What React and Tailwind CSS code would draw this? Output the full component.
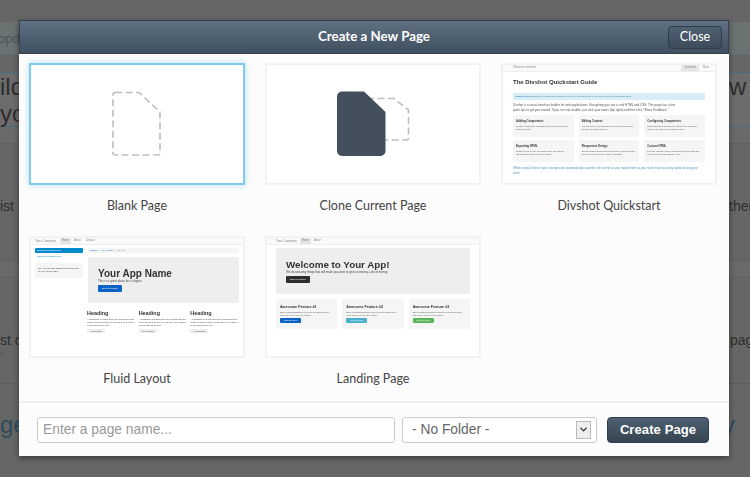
import { ChevronDown } from 'lucide-react';

const thumbNav = 'flex items-center h-[7px] bg-[#fafafa] border-b border-[#eee] text-[#888] text-[2.6px]';

const wells = [
  ['Adding Components', 'To add a component, just drag it from the list on the right onto the canvas.'],
  ['Editing Content', 'You can edit the text sections of a component by double-clicking. Try editing this text!'],
  ['Configuring Components', 'Each component has different options. The "Inspector" panel on the right lets you change them.'],
  ['Exporting HTML', 'Divshot is built to give you usable code, just click the "Export Code" button in the top toolbar.'],
  ['Responsive Design', 'Divshot designs look great on any device. Click the laptop icon to preview for phone, tablet, or desktop.'],
  ['Custom HTML', 'Drop the "Custom HTML" component onto the page and double-click it to add arbitrary HTML.'],
];

const features = [
  ['Awesome Feature #1', 'bg-[#0a62c4]'],
  ['Awesome Feature #2', 'bg-[#49afcd]'],
  ['Awesome Feature #3', 'bg-[#5bb75b]'],
];

function BlankIcon() {
  return (
    <svg width="50" height="66" viewBox="0 0 50 66" fill="none">
      <path
        d="M3 1.5H27L48 21V62a2 2 0 0 1-2 2H3a2 2 0 0 1-2-2V3.5a2 2 0 0 1 2-2Z"
        stroke="#bcbec1"
        strokeWidth="1.6"
        strokeDasharray="7 3.5"
      />
    </svg>
  );
}

function CloneIcon() {
  return (
    <svg width="74" height="66" viewBox="0 0 74 66" fill="none">
      <path
        d="M30 7.5H57L71.5 19V47a2 2 0 0 1-2 2H40"
        stroke="#bcbec1"
        strokeWidth="1.6"
        strokeDasharray="7 3.5"
      />
      <path
        d="M5 0.5H27L48.5 21V60a5 5 0 0 1-5 5H5a5 5 0 0 1-5-5V5.5a5 5 0 0 1 5-5Z"
        fill="#444f5e"
      />
    </svg>
  );
}

function QuickstartThumb() {
  return (
    <div className="h-full flex flex-col blur-[0.3px]">
      <div className={thumbNav}>
        <span className="ml-[10px] flex-1">Welcome to Divshot</span>
        <span className="bg-[#e5e5e5] h-full px-[3px] flex items-center">Quickstart</span>
        <span className="px-[4px] mr-[2px]">More</span>
      </div>
      <div className="px-[10px]">
        <div className="mt-[6px] text-[6px] leading-[8px] font-bold text-[#333]">The Divshot Quickstart Guide</div>
        <div className="mt-[7px] h-[7px] bg-[#d9edf7] text-[#3a87ad] text-[2.3px] leading-[7px] px-[2px] whitespace-nowrap overflow-hidden">
          <b>Ready to dive in?</b> Click the page name dropdown in the top left and create a new page using the embedded form.
        </div>
        <p className="mt-[3px] text-[3.05px] leading-[4.6px] text-[#555] whitespace-nowrap">
          Divshot is a visual interface builder for web applications. Everything you see is real HTML and CSS. This page has a few<br />
          quick tips to get you started. If you run into trouble, just click your name (top right) and then click "Share Feedback."
        </p>
        <div className="mt-[3px] grid grid-cols-3 gap-x-[5px] gap-y-[3px]">
          {wells.map(([title, text]) => (
            <div key={title} className="h-[22px] bg-[#f5f5f5] rounded-[1px] px-[3px] pt-[5px] text-[2.1px] leading-[3px] text-[#555]">
              <div className="text-[2.8px] leading-[3.5px] font-bold text-[#333]">{title}</div>
              <div className="mt-[1px]">{text}</div>
            </div>
          ))}
        </div>
        <p className="mt-[4px] text-[3.05px] leading-[5px] text-[#4d93b8]">
          While using Divshot, your changes are automatically saved to the server as you make them so you never have to worry about losing your work.
        </p>
      </div>
    </div>
  );
}

function FluidThumb() {
  return (
    <div className="h-full flex flex-col blur-[0.3px]">
      <div className={thumbNav}>
        <span className="ml-[4px] mr-[4px] text-[3.2px]">Your Company</span>
        <span className="bg-[#e5e5e5] h-full px-[2px] flex items-center">Home</span>
        <span className="px-[3px]">About</span>
        <span className="px-[2px]">Contact</span>
      </div>
      <div className="flex gap-[5px] pl-[4px] pr-[4px] pt-[3px]">
        <div className="w-[48px] text-[2.3px]">
          <div className="h-[5px] leading-[5px] px-[2px] bg-[#0088cc] text-white rounded-[1px]">Sidebar Navigation One</div>
          <div className="h-[5px] leading-[5px] mt-[1px] px-[2px] text-[#0088cc]">Sidebar Navigation Two</div>
          <div className="mt-[4px] h-[15px] bg-[#f5f5f5] rounded-[1px] px-[3px] py-[4px] leading-[3px] text-[#444]">
            Tip: You can add additional components to your layout easily
          </div>
        </div>
        <div className="flex-1">
          <div className="h-[5px] leading-[5px] px-[2px] bg-[#f5f5f5] text-[2.3px] text-[#0088cc]">
            Original <span className="ml-[2px]">Add Another</span> <span className="ml-[2px] text-[#999]">Last One</span>
          </div>
          <div className="mt-[4px] h-[46px] bg-[#eeeeee] pl-[10px] pt-[12px]">
            <div className="text-[10px] leading-[10px] font-bold text-[#333]">Your App Name</div>
            <div className="mt-[1px] text-[3px] leading-[3px] text-[#444]">This is a great place for a slogan.</div>
            <div className="mt-[2px] w-[24px] h-[7px] rounded-[1px] bg-[#0a62c4] text-white text-[2.4px] leading-[7px] text-center">Sign Up Today!</div>
          </div>
          <div className="mt-[7px] grid grid-cols-3 gap-x-[3px] -ml-[1px]">
            {[0, 1, 2].map((i) => (
              <div key={i} className="text-[2.2px] leading-[3px] text-[#444]">
                <div className="text-[5.4px] leading-[7px] font-bold text-[#333]">Heading</div>
                <div className="mt-[1px]">A paragraph of details about the heading and the related content so that you can have an example of how this should look.</div>
                <div className="mt-[2px] w-[18px] h-[4px] bg-[#eee] leading-[4px] text-center text-[#555]">View Details</div>
              </div>
            ))}
          </div>
        </div>
      </div>
    </div>
  );
}

function LandingThumb() {
  return (
    <div className="h-full flex flex-col blur-[0.3px]">
      <div className={thumbNav}>
        <span className="ml-[9px] mr-[3px] text-[3.2px]">Your Company</span>
        <span className="bg-[#e5e5e5] h-full px-[2px] flex items-center">Home</span>
        <span className="px-[3px]">About</span>
      </div>
      <div className="px-[9px]">
        <div className="mt-[3px] h-[46px] bg-[#eeeeee] rounded-[1px] pl-[10px] pt-[12px]">
          <div className="text-[9.8px] leading-[10px] font-bold text-[#333]">Welcome to Your App!</div>
          <div className="mt-[1px] text-[2.9px] leading-[3px] text-[#444]">We do amazing things that will make you want to give us money. Lots of money.</div>
          <div className="mt-[2px] w-[24px] h-[7px] rounded-[1px] bg-[#2d2d2d] text-white text-[2.4px] leading-[7px] text-center">Sign Up Today!</div>
        </div>
        <div className="mt-[5px] grid grid-cols-3 gap-x-[5px]">
          {features.map(([title, color]) => (
            <div key={title} className="h-[30px] bg-[#f5f5f5] rounded-[1px] px-[4px] pt-[6px] text-[2.1px] leading-[3px] text-[#555]">
              <div className="text-[3.7px] leading-[5px] font-bold text-[#333]">{title}</div>
              <div className="mt-[1px]">Enter a small description of why it's so awesome here. Then move on to the next feature.</div>
              <div className={`mt-[1px] w-[21px] h-[5px] rounded-[1px] text-white leading-[5px] text-center ${color}`}>Find Out More</div>
            </div>
          ))}
        </div>
      </div>
    </div>
  );
}

function Template({ label, active, children, className }) {
  return (
    <div className="flex flex-col">
      <div
        className={`h-[122px] bg-white border-2 overflow-hidden ${active ? 'border-[#7fcbe8] shadow-[0_0_6px_rgba(127,203,232,0.6)]' : 'border-[#f2f2f2]'} ${className || ''}`}
      >
        {children}
      </div>
      <div className="mt-[12px] h-[18px] text-center font-['Lato',sans-serif] text-[12.5px] leading-[18px] text-[#444]">
        {label}
      </div>
    </div>
  );
}

export default function App() {
  return (
    <div className="relative h-[477px] w-[750px] overflow-hidden bg-[#666666] font-['Liberation_Sans',sans-serif] text-[#2e2e2e]">
      {/* page behind the modal */}
      <div className="h-[22px]" />
      <div className="h-[33px] bg-[#6b7272] border-b border-[#607078] text-[13px] leading-[33px] text-[#46545c] -indent-[2px]">opd</div>
      <div className="h-[17px]" />
      <div className="h-[55px] bg-[#6c6c6c] border-y border-[#4a6c80] flex justify-between text-[24px] leading-[27px]">
        <div>
          ilde
          <br />
          yo
        </div>
        <div className="w-[21px]">w</div>
      </div>
      <div className="h-[17px] bg-[#6a6a6a] border-b border-[#606060]" />
      <div className="h-[116px] flex justify-between items-start pt-[52px] text-[14px] leading-[20px]">
        <span>ist c</span>
        <span className="w-[21px] whitespace-nowrap">ther</span>
      </div>
      <div className="h-[17px] bg-[#6a6a6a] border-y border-[#606060]" />
      <div className="h-[106px] flex justify-between items-start pt-[55px] text-[14px] leading-[16px]">
        <div>
          <div>st c</div>
          <div className="text-[10px] leading-[6px]">.</div>
        </div>
        <span className="w-[20px] whitespace-nowrap">pag</span>
      </div>
      <div className="flex justify-between border-t border-[#5c5c5c] pt-[27px] text-[24px] leading-[28px] text-[#2f4a5c]">
        <span>ge</span>
        <span className="w-[27px]">y</span>
      </div>

      {/* modal */}
      <div className="absolute left-[19px] top-[20px] w-[710px] h-[436px] flex flex-col bg-[#fcfcfc] shadow-[0_2px_6px_rgba(0,0,0,0.45)]">
        <div className="h-[34px] shrink-0 flex items-center justify-end pr-[6px] relative bg-gradient-to-b from-[#5f7183] to-[#3f4f5e] border border-[#34424f]">
          <div className="absolute inset-x-0 text-center font-['Lato',sans-serif] font-bold text-[13.3px] text-white">
            Create a New Page
          </div>
          <button className="relative w-[54px] h-[23px] rounded-[4px] border border-[#2f3c49] bg-gradient-to-b from-[#4f6071] to-[#3d4c5b] font-['Lato',sans-serif] text-[12.5px] text-white">
            Close
          </button>
        </div>

        <div className="flex-1 grid grid-cols-[216px_216px_216px] gap-x-[20px] content-start pl-[10px] pt-[9px] gap-y-[21px]">
          <Template label="Blank Page" active className="flex items-center justify-center">
            <BlankIcon />
          </Template>
          <Template label="Clone Current Page" className="flex items-center pl-[70px]">
            <CloneIcon />
          </Template>
          <Template label="Divshot Quickstart">
            <QuickstartThumb />
          </Template>
          <Template label="Fluid Layout">
            <FluidThumb />
          </Template>
          <Template label="Landing Page">
            <LandingThumb />
          </Template>
        </div>

        <div className="h-[55px] shrink-0 border-t-2 border-[#eeeeee] flex items-center pl-[18px]">
          <input
            placeholder="Enter a page name..."
            className="w-[358px] h-[26px] px-[5px] bg-white border border-[#ccc] rounded-[3px] text-[13.8px] placeholder:text-[#999] outline-none"
          />
          <div className="relative ml-[7px] w-[195px] h-[26px]">
            <select className="w-full h-full appearance-none pl-[9px] bg-white border border-[#ccc] rounded-[3px] text-[13.8px] text-[#666] outline-none">
              <option>- No Folder -</option>
            </select>
            <div className="absolute left-[174px] top-[4px] w-[15px] h-[18px] flex items-center justify-center bg-[#eeeeee] border border-[#bbb]">
              <ChevronDown className="w-[11px] h-[11px] text-[#333]" strokeWidth={3} />
            </div>
          </div>
          <button className="ml-[10px] w-[102px] h-[26px] rounded-[4px] border border-[#2f3c49] bg-gradient-to-b from-[#4e6072] to-[#35444f] text-[13px] font-bold tracking-[0.1px] text-white">
            Create Page
          </button>
        </div>
      </div>
    </div>
  );
}
